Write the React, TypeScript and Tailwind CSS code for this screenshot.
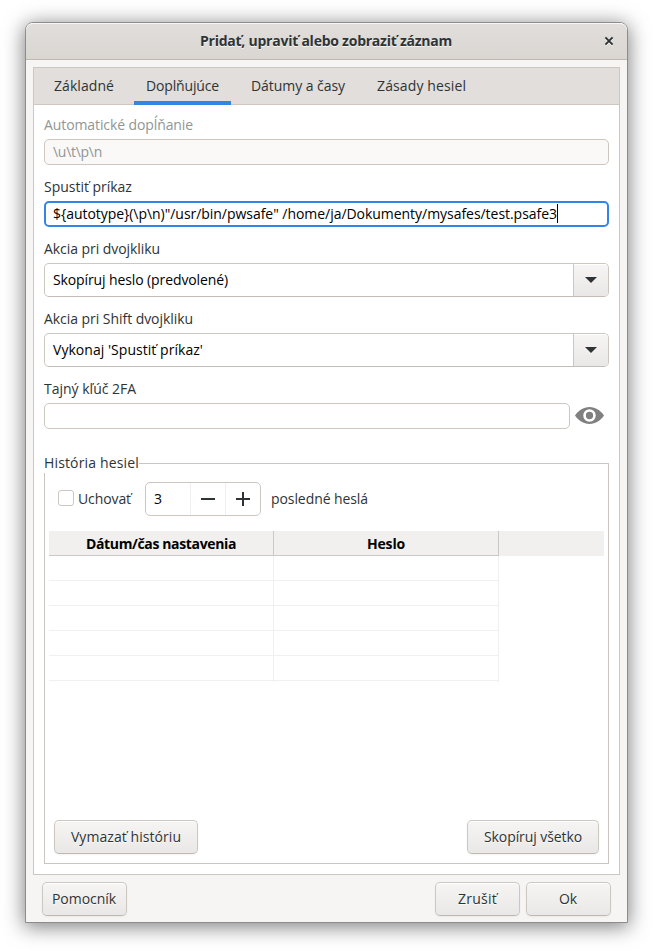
import React from "react";

function Label({ children, className = "" }: { children: React.ReactNode; className?: string }) {
  return <div className={`h-[20px] leading-[20px] whitespace-nowrap ${className}`}>{children}</div>;
}

function Button({ children, className = "" }: { children: React.ReactNode; className?: string }) {
  return (
    <button
      className={`flex h-[34px] items-center justify-center whitespace-nowrap rounded-[5px] border border-[#cdc7c2] border-b-[#bfb8b1] bg-linear-to-b from-[#f6f5f3] to-[#eae8e6] pb-0.5 shadow-[inset_0_1px_#ffffff,0_1px_2px_rgba(0,0,0,0.05)] [text-shadow:0_1px_rgba(255,255,255,0.77)] ${className}`}
    >
      {children}
    </button>
  );
}

function ComboBox({ children, className = "" }: { children: React.ReactNode; className?: string }) {
  return (
    <div className={`flex h-[34px] overflow-hidden rounded-[5px] border border-[#cdc7c2] border-b-[#c4bdb7] bg-white ${className}`}>
      <div className="flex flex-1 items-center pb-0.5 pl-2 whitespace-nowrap text-black">{children}</div>
      <div className="flex w-[35px] items-center justify-center border-l border-[#cdc7c2] bg-linear-to-b from-[#f6f5f3] to-[#eae8e6] shadow-[inset_0_1px_#ffffff]">
        <svg width="12" height="6" viewBox="0 0 12 6" className="block">
          <path d="M0 0h12L6 6z" fill="#2e3436" />
        </svg>
      </div>
    </div>
  );
}

function HistoryTable() {
  return (
    <div className="ml-1 mt-[15px] w-[555px]">
      <div className="flex h-[25px] bg-[#f1f0ee] text-center leading-[25px] font-bold text-black">
        <div className="w-[225px] border-r border-b border-[#cbc8c5] tracking-[-0.36px]">Dátum/čas nastavenia</div>
        <div className="w-[225px] border-r border-b border-[#cbc8c5] tracking-[-0.18px]">Heslo</div>
      </div>
      {[0, 1, 2, 3, 4].map((row) => (
        <div key={row} className="flex h-[25px]">
          <div className="w-[225px] border-r border-b border-[#f0f0f0]" />
          <div className="w-[225px] border-r border-b border-[#f0f0f0]" />
        </div>
      ))}
      <div className="flex h-px">
        <div className="w-[225px] border-r border-[#f0f0f0]" />
        <div className="w-[225px] border-r border-[#f0f0f0]" />
      </div>
    </div>
  );
}

export default function App() {
  return (
    <div className="h-[951px] w-[653px] overflow-hidden bg-white pl-[25px] pt-[22px] font-['Open_Sans','Noto_Sans',sans-serif] text-[14px] text-[#2e3436]">
      <div className="flex h-[901px] w-[603px] flex-col rounded-t-[8px] border border-[#8c8c8c] bg-[#f6f5f4] shadow-[0_3px_20px_1px_rgba(0,0,0,0.5)]">
        <header className="flex h-[37px] items-center rounded-t-[7px] border-b border-[#bfb8b1] bg-linear-to-b from-[#e1dedb] to-[#dad6d2] shadow-[inset_0_1px_#f8f7f7]">
          <div className="flex-1 pb-0.5 pl-[35px] text-center font-bold tracking-[-0.24px] whitespace-nowrap [text-shadow:0_1px_rgba(255,255,255,0.77)]">
            Pridať, upraviť alebo zobraziť záznam
          </div>
          <div className="flex w-9 justify-center">
            <svg width="10" height="10" viewBox="0 0 10 10" className="block">
              <path d="M1.5 2.2l7 7M8.5 2.2l-7 7" stroke="#ffffff" strokeWidth="2" />
              <path d="M1.4 1.4l7.2 7.2M8.6 1.4l-7.2 7.2" stroke="#2e3436" strokeWidth="2" />
            </svg>
          </div>
        </header>

        <main className="ml-[7px] mt-[7px] flex h-[808px] w-[587px] flex-col border border-[#cdc7c2] bg-white">
          <nav className="flex h-[37px] border-b border-[#cdc7c2] bg-[#e1dedb] leading-[35px] whitespace-nowrap">
            <div className="ml-2 w-[92px] pl-3 tracking-[0.06px]">Základné</div>
            <div className="h-[37px] w-[97px] border-b-4 border-[#3584e4] pl-3 tracking-[-0.15px]">Doplňujúce</div>
            <div className="ml-2 w-[118px] pl-3 tracking-[-0.05px]">Dátumy a časy</div>
            <div className="ml-2 w-[113px] pl-3 tracking-[0.12px]">Zásady hesiel</div>
          </nav>

          <div className="flex flex-col pl-[10px] pt-[10px]">
            <Label className="tracking-[-0.1px] text-[#929595]">Automatické dopĺňanie</Label>
            <div className="mt-1 flex h-[26px] w-[565px] items-center rounded-[5px] border border-[#cdc7c2] bg-[#faf9f8] pb-0.5 pl-2 tracking-[-0.28px] text-[#929595]">
              {"\\u\\t\\p\\n"}
            </div>

            <Label className="mt-3 tracking-[-0.02px]">Spustiť príkaz</Label>
            <div className="mt-1 flex h-[26px] w-[565px] items-center rounded-[5px] border-2 border-[#3584e4] bg-white pb-0.5 pl-[7px] tracking-[-0.04px] whitespace-nowrap text-black">
              {'${autotype}(\\p\\n)"/usr/bin/pwsafe" /home/ja/Dokumenty/mysafes/test.psafe3'}
              <span className="h-[19px] w-px bg-black" />
            </div>

            <Label className="mt-3 tracking-[-0.06px]">Akcia pri dvojkliku</Label>
            <ComboBox className="mt-1 w-[565px] tracking-[-0.11px]">Skopíruj heslo (predvolené)</ComboBox>

            <Label className="mt-3 tracking-[-0.05px]">Akcia pri Shift dvojkliku</Label>
            <ComboBox className="mt-1 w-[565px] tracking-[0.04px]">Vykonaj 'Spustiť príkaz'</ComboBox>

            <Label className="mt-3">Tajný kľúč 2FA</Label>
            <div className="mt-1 flex h-[26px] items-center">
              <div className="h-[26px] w-[526px] rounded-[5px] border border-[#cdc7c2] bg-white" />
              <svg width="29" height="17" viewBox="0 0 29 17" className="ml-[5px] mt-[-1px] block">
                <path d="M0 8.5C3 4 8.500 0 14.500 0S26 4 29 8.500C26 13 20.500 17 14.500 17S3 13 0 8.500z" fill="#808080" />
                <circle cx="14.5" cy="8.500" r="4.950" fill="#808080" stroke="#ffffff" strokeWidth="2.600" />
              </svg>
            </div>

            <fieldset className="mt-6 h-[411px] w-[565px] border border-[#c8c5c2]">
              <legend className="-ml-px h-[20px] leading-[20px] tracking-[0.15px] whitespace-nowrap">História hesiel</legend>
              <div className="ml-[13px] mt-[9px] flex h-[34px] items-center whitespace-nowrap">
                <span className="mb-0.5 h-4 w-4 rounded-[3px] border border-[#cdc7c2] bg-white" />
                <span className="ml-1 w-[67px] pb-0.5 tracking-[-0.1px]">Uchovať</span>
                <div className="flex h-[34px] w-[116px] rounded-[5px] border border-[#cdc7c2] bg-white text-black">
                  <span className="w-[44px] pl-2 leading-[32px]">3</span>
                  <span className="flex w-[35px] items-center justify-center border-l border-[#f0efee]">
                    <svg width="14" height="14" viewBox="0 0 14 14" className="block">
                      <path d="M0 7h14" stroke="#2e3436" strokeWidth="2" />
                    </svg>
                  </span>
                  <span className="flex w-[35px] items-center justify-center border-l border-[#f0efee]">
                    <svg width="14" height="14" viewBox="0 0 14 14" className="block">
                      <path d="M0 7h14M7 0v14" stroke="#2e3436" strokeWidth="2" />
                    </svg>
                  </span>
                </div>
                <span className="ml-[10px] pb-0.5 tracking-[-0.08px]">posledné heslá</span>
              </div>
              <HistoryTable />
              <div className="mt-[138px] flex justify-between px-[9px]">
                <Button className="w-[144px] tracking-[0.06px]">Vymazať históriu</Button>
                <Button className="w-[132px] tracking-[-0.09px]">Skopíruj všetko</Button>
              </div>
            </fieldset>
          </div>
        </main>

        <footer className="ml-4 mt-[7px] flex w-[569px]">
          <Button className="w-[85px] pr-px tracking-[-0.05px]">Pomocník</Button>
          <Button className="ml-auto w-[85px] tracking-[0.25px]">Zrušiť</Button>
          <Button className="ml-[6px] w-[85px] pr-px">Ok</Button>
        </footer>
      </div>
    </div>
  );
}
